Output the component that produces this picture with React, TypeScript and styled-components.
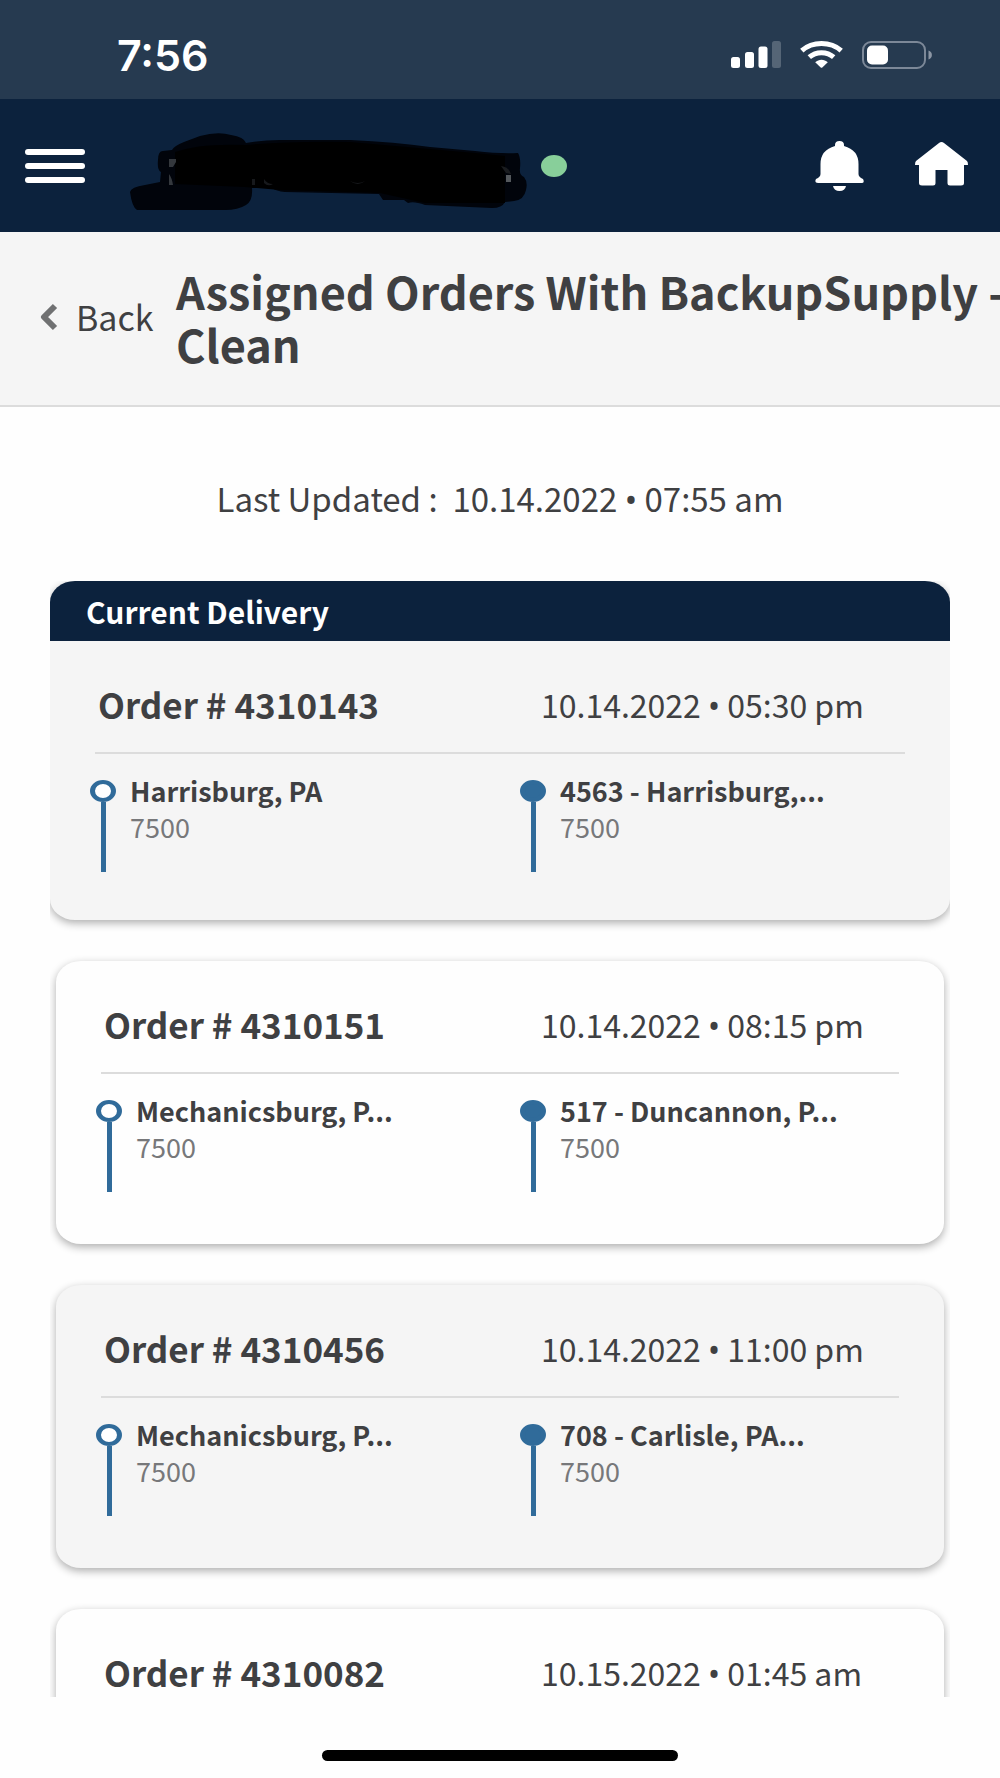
import React from "react";
import styled, { createGlobalStyle } from "styled-components";

const navy = "#0c223d";
const ink = "#3f4042";
const blue = "#306b9a";

const GlobalStyle = createGlobalStyle`
  *, *::before, *::after { box-sizing: border-box; }
  body {
    margin: 0;
    background: #fefefe;
    color: ${ink};
    font-family: "Noto Sans CJK SC", "Noto Sans", "Open Sans", sans-serif;
  }
  h1, h2, h3, p, ul { margin: 0; padding: 0; }
  button { border: 0; padding: 0; background: none; color: inherit; font: inherit; cursor: pointer; }
  svg { display: block; }
`;

const Screen = styled.div`
  display: flex;
  flex-direction: column;
  height: 100vh;
  overflow: hidden;
`;

const StatusBar = styled.div`
  flex: none;
  display: flex;
  align-items: center;
  justify-content: space-between;
  height: 99px;
  padding: 10px 68px 0 117px;
  background: #263a50;
  color: #fff;
`;

const Clock = styled.time`
  font: 600 43px/44px Inter, "Liberation Sans", sans-serif;
`;

const StatusIcons = styled.div`
  display: flex;
  align-items: center;
  gap: 19px;
`;

const NavBar = styled.header`
  flex: none;
  display: flex;
  align-items: center;
  height: 133px;
  padding: 0 32px 0 25px;
  background: ${navy};
  color: #fff;
`;

const MenuButton = styled.button`
  display: flex;
  flex-direction: column;
  gap: 8px;
  width: 60px;
`;

const MenuLine = styled.span`
  height: 6px;
  border-radius: 3px;
  background: #fff;
`;

const Brand = styled.div`
  display: flex;
  align-items: center;
  gap: 14px;
  margin-left: 44px;
`;

const OnlineDot = styled.span`
  width: 26px;
  height: 22px;
  border-radius: 50%;
  background: #88cf9a;
`;

const NavActions = styled.nav`
  display: flex;
  align-items: center;
  gap: 50px;
  margin-left: auto;
`;

const SubHeader = styled.div`
  flex: none;
  display: flex;
  align-items: center;
  height: 175px;
  padding: 0 0 4px 40px;
  border-bottom: 2px solid #dcdcdc;
  background: #f5f5f5;
  overflow: hidden;
`;

const BackButton = styled.button`
  flex: none;
  display: flex;
  align-items: center;
  gap: 18px;
  width: 136px;
  font-size: 34px;
  line-height: 40px;
`;

const Title = styled.h1`
  flex: none;
  font-size: 45px;
  font-weight: 700;
  line-height: 53px;
  white-space: nowrap;
`;

const Updated = styled.p`
  flex: none;
  padding: 66px 0 58px;
  font-size: 33px;
  line-height: 50px;
  text-align: center;
  white-space: pre;
`;

const Bullet = styled.span`
  font-family: "Noto Sans", sans-serif;
  line-height: 1;
`;

const Orders = styled.ul`
  flex: 1;
  min-height: 0;
  display: flex;
  flex-direction: column;
  gap: 41px;
  margin: 0 50px;
  overflow-x: hidden;
  overflow-y: auto;
  scrollbar-width: none;
  list-style: none;
`;

const Card = styled.li<{ $current?: boolean; $shaded?: boolean }>`
  flex: none;
  margin: 0 ${(p) => (p.$current ? 0 : 6)}px;
  border-radius: 25px / 21px;
  background: ${(p) => (p.$shaded ? "#f5f5f5" : "#fefefe")};
  box-shadow: 0 3px 9px rgba(0, 0, 0, 0.32);
`;

const CurrentLabel = styled.h2`
  padding: 0 36px;
  border-radius: 25px 25px 0 0 / 21px 21px 0 0;
  background: ${navy};
  color: #fff;
  font-size: 30px;
  line-height: 60px;
`;

const CardBody = styled.div<{ $current?: boolean }>`
  padding: 38px 40px ${(p) => (p.$current ? 48 : 52)}px;
`;

const CardHead = styled.div`
  display: grid;
  grid-template-columns: 1fr 1fr;
  align-items: center;
  margin: 0 5px;
  padding-bottom: 23px;
  border-bottom: 2px solid #dcdcdc;
`;

const OrderNumber = styled.h3`
  padding-left: 3px;
  font-size: 35px;
  font-weight: 700;
  line-height: 50px;
  white-space: nowrap;
`;

const DueTime = styled.time`
  padding-left: 41px;
  font-size: 32px;
  line-height: 50px;
  white-space: nowrap;
`;

const Stops = styled.div`
  display: grid;
  grid-template-columns: 1fr 1fr;
  padding-top: 19px;
`;

const Stop = styled.div<{ $end?: boolean }>`
  display: flex;
  gap: 14px;
  padding-left: ${(p) => (p.$end ? 20 : 0)}px;
`;

const Pin = styled.div`
  display: flex;
  flex-direction: column;
  align-items: center;
  width: 26px;
  height: 92px;
  margin-top: 7px;
`;

const PinHead = styled.span<{ $filled?: boolean }>`
  width: 26px;
  height: 22px;
  border: 4px solid ${blue};
  border-width: 4px 5px;
  border-radius: 50%;
  background: ${(p) => (p.$filled ? blue : "#fff")};
`;

const PinStem = styled.span`
  flex: 1;
  width: 5px;
  background: ${blue};
`;

const Place = styled.p`
  font-size: 27px;
  font-weight: 700;
  line-height: 36px;
  white-space: nowrap;
`;

const Quantity = styled.p`
  color: #77787a;
  font-size: 27px;
  line-height: 36px;
`;

const HomeArea = styled.footer`
  flex: none;
  display: flex;
  justify-content: center;
  align-items: flex-start;
  height: 81px;
  padding-top: 53px;
`;

const HomeIndicator = styled.span`
  width: 356px;
  height: 11px;
  border-radius: 6px;
  background: #000;
`;

type StopData = { place: string; quantity: string };
type Order = { id: string; date: string; time: string; stops?: [StopData, StopData] };

const orders: Order[] = [
  {
    id: "4310143",
    date: "10.14.2022",
    time: "05:30 pm",
    stops: [
      { place: "Harrisburg, PA", quantity: "7500" },
      { place: "4563 - Harrisburg,...", quantity: "7500" },
    ],
  },
  {
    id: "4310151",
    date: "10.14.2022",
    time: "08:15 pm",
    stops: [
      { place: "Mechanicsburg, P...", quantity: "7500" },
      { place: "517 - Duncannon, P...", quantity: "7500" },
    ],
  },
  {
    id: "4310456",
    date: "10.14.2022",
    time: "11:00 pm",
    stops: [
      { place: "Mechanicsburg, P...", quantity: "7500" },
      { place: "708 - Carlisle, PA...", quantity: "7500" },
    ],
  },
  { id: "4310082", date: "10.15.2022", time: "01:45 am" },
];

const SignalIcon = () => (
  <svg width="50" height="27" viewBox="0 0 50 27" fill="#fff" aria-hidden="true">
    <rect x="0" y="16" width="9" height="11" rx="2.5" />
    <rect x="14" y="11" width="9" height="16" rx="2.5" />
    <rect x="27.5" y="5.5" width="9" height="21.5" rx="2.5" />
    <rect x="41" y="0" width="9" height="27" rx="2.5" opacity="0.22" />
  </svg>
);

const WifiIcon = () => (
  <svg width="43" height="27" viewBox="0 0 43 27" aria-hidden="true">
    <g fill="none" stroke="#fff" strokeWidth="5">
      <path d="M1.8 9.6C7 5 14 2.5 21.5 2.5S36 5 41.2 9.6" />
      <path d="M9.3 16.2C12.6 13.2 17 11.7 21.5 11.7S30.4 13.2 33.7 16.2" />
    </g>
    <path fill="#fff" d="M15.2 21.2C18.8 17.8 24.2 17.8 27.8 21.2L22.3 26.4Q21.5 27 20.7 26.4Z" />
  </svg>
);

const BatteryIcon = () => (
  <svg width="70" height="28" viewBox="0 0 70 28" aria-hidden="true">
    <rect x="1" y="1" width="62" height="26" rx="8" fill="none" stroke="#7c8898" strokeWidth="2" />
    <rect x="5" y="4.5" width="21" height="19" rx="5" fill="#fff" />
    <path d="M66.5 9.5C71 11 71 17 66.5 18.5Z" fill="#8c96a4" />
  </svg>
);

const RedactedName = () => (
  <svg width="398" height="93" viewBox="129 119 398 93" aria-hidden="true">
    <path
      fill="#01040b"
      d="M130 192Q131 187 145 185L160 182L161 172Q157 170 158 160Q158 151 163 151L172 150Q174 146 184 142L200 136Q218 131 231 135Q244 137 246 143Q262 140 280 140L350 140Q395 142 430 147L475 151Q500 154 518 153Q521 158 520 168Q519 175 524 177Q528 182 526 190Q524 200 514 201L505 202Q502 208 492 208L425 205Q414 201 408 203L404 200L383 200L379 194L285 192Q276 191 272 188L252 188Q253 201 246 205Q238 210 225 210L137 210Q132 207 130 192Z"
    />
    <path
      fill="#000"
      d="M175 152Q200 143 246 145Q290 141 350 142L475 153L505 156V203L425 203L380 193L280 190L245 187L175 184Z"
    />
    <path d="M169 159H176V162L173 167H169ZM169 174Q172 178 173 185H169Z" fill="#34383d" />
    <path d="M506 175H511V182H506Z" fill="#54585c" />
    <path d="M501 166Q509 167 511 174L506 173Z" fill="#1a1c1f" />
    <path d="M252 179H255V185H252ZM264 179Q267 184 273 184Q268 187 264 183ZM350 181Q358 187 365 181Q358 185 350 181Z" fill="#17191c" />
  </svg>
);

const BellIcon = () => (
  <svg width="50" height="50" viewBox="0 0 50 50" fill="#fff" aria-hidden="true">
    <path d="M20 4Q20 0 24.5 0Q29 0 29 4V5Q43.5 9 43.5 23V33Q43.5 36 48 38Q50 42 46.5 42H3Q-1 42 1 38Q5.5 36 5.5 33V23Q5.5 9 20 5Z" />
    <path d="M18 45H31Q30 50 24.5 50Q19 50 18 45Z" />
  </svg>
);

const HouseIcon = () => (
  <svg width="53" height="48" viewBox="0 0 53 48" fill="#fff" aria-hidden="true">
    <path d="M24 1Q26.5 -1 29 1L52 19Q53 20 53 23H49V41Q49 43.5 46 43.5H35Q32.5 43.5 32.5 41V28H20.5V41Q20.5 43.5 18 43.5H7Q4 43.5 4 41V23H0Q0 20 1 19Z" />
  </svg>
);

const ChevronLeft = () => (
  <svg width="18" height="28" viewBox="0 0 18 28" aria-hidden="true">
    <path d="M15 3L4 14L15 25" fill="none" stroke="#707172" strokeWidth="6" strokeLinejoin="round" />
  </svg>
);

function OrderCard({ order, index }: { order: Order; index: number }) {
  const current = index === 0;
  return (
    <Card $current={current} $shaded={index % 2 === 0}>
      {current && <CurrentLabel>Current Delivery</CurrentLabel>}
      <CardBody $current={current}>
        <CardHead>
          <OrderNumber>Order # {order.id}</OrderNumber>
          <DueTime>
            {order.date} <Bullet>•</Bullet> {order.time}
          </DueTime>
        </CardHead>
        {order.stops && (
          <Stops>
            {order.stops.map((stop, i) => (
              <Stop key={i} $end={i === 1}>
                <Pin>
                  <PinHead $filled={i === 1} />
                  <PinStem />
                </Pin>
                <div>
                  <Place>{stop.place}</Place>
                  <Quantity>{stop.quantity}</Quantity>
                </div>
              </Stop>
            ))}
          </Stops>
        )}
      </CardBody>
    </Card>
  );
}

export default function App() {
  return (
    <>
      <GlobalStyle />
      <Screen>
        <StatusBar>
          <Clock>7:56</Clock>
          <StatusIcons>
            <SignalIcon />
            <WifiIcon />
            <BatteryIcon />
          </StatusIcons>
        </StatusBar>
        <NavBar>
          <MenuButton aria-label="Menu">
            <MenuLine />
            <MenuLine />
            <MenuLine />
          </MenuButton>
          <Brand>
            <RedactedName />
            <OnlineDot />
          </Brand>
          <NavActions>
            <button aria-label="Notifications">
              <BellIcon />
            </button>
            <button aria-label="Home">
              <HouseIcon />
            </button>
          </NavActions>
        </NavBar>
        <SubHeader>
          <BackButton>
            <ChevronLeft />
            Back
          </BackButton>
          <Title>
            Assigned Orders With BackupSupply -<br />
            Clean
          </Title>
        </SubHeader>
        <Updated>
          {"Last Updated :  10.14.2022 "}
          <Bullet>•</Bullet>
          {" 07:55 am"}
        </Updated>
        <Orders>
          {orders.map((order, i) => (
            <OrderCard key={order.id} order={order} index={i} />
          ))}
        </Orders>
        <HomeArea>
          <HomeIndicator />
        </HomeArea>
      </Screen>
    </>
  );
}
